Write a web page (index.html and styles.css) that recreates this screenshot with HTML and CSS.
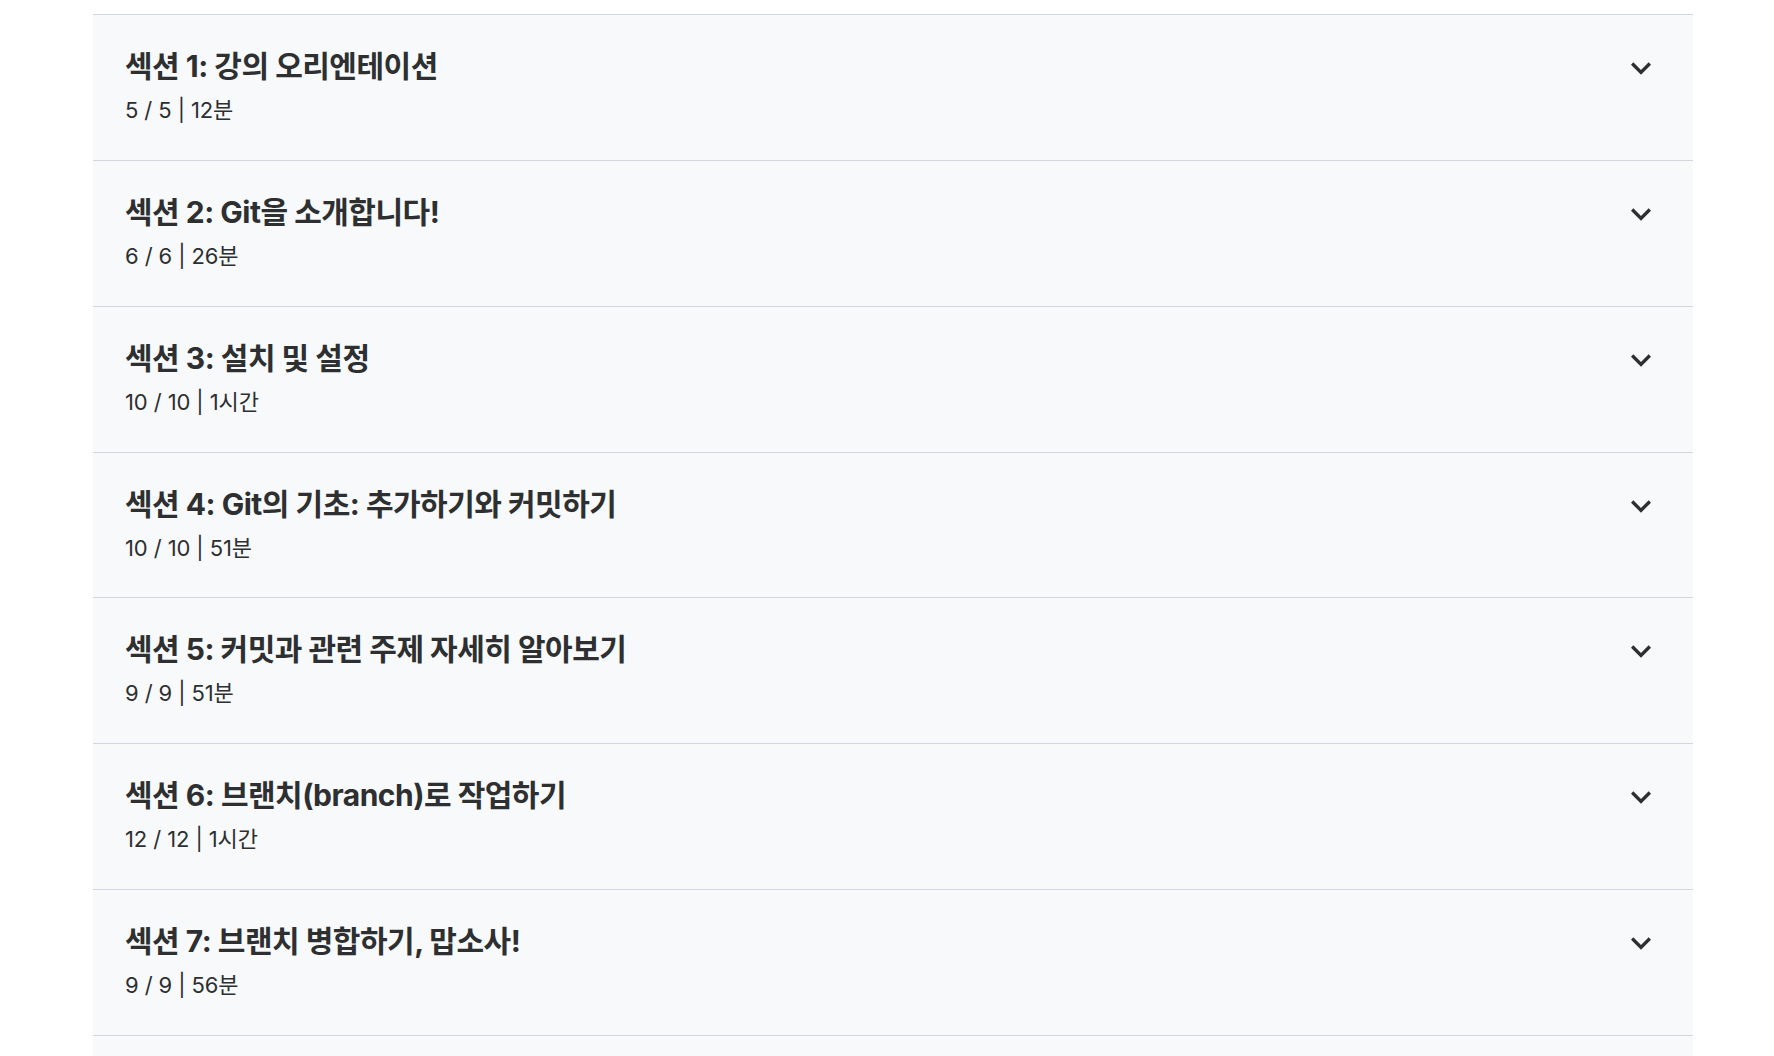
FILE: index.html
```html
<!DOCTYPE html>
<html lang="ko">
<head>
<meta charset="utf-8">
<title>강의 콘텐츠</title>
<link rel="stylesheet" href="styles.css">
</head>
<body>
<div class="page">
  <div class="curriculum">
    <div class="section">
      <div class="info">
        <div class="title">섹션 1: 강의 오리엔테이션</div>
        <div class="meta">5 / 5 | 12분</div>
      </div>
      <svg class="chev" viewBox="0 0 24 24"><path d="M16.59 8.59L12 13.17 7.41 8.59 6 10l6 6 6-6z"/></svg>
    </div>
    <div class="section">
      <div class="info">
        <div class="title">섹션 2: Git을 소개합니다!</div>
        <div class="meta">6 / 6 | 26분</div>
      </div>
      <svg class="chev" viewBox="0 0 24 24"><path d="M16.59 8.59L12 13.17 7.41 8.59 6 10l6 6 6-6z"/></svg>
    </div>
    <div class="section">
      <div class="info">
        <div class="title">섹션 3: 설치 및 설정</div>
        <div class="meta">10 / 10 | 1시간</div>
      </div>
      <svg class="chev" viewBox="0 0 24 24"><path d="M16.59 8.59L12 13.17 7.41 8.59 6 10l6 6 6-6z"/></svg>
    </div>
    <div class="section">
      <div class="info">
        <div class="title">섹션 4: Git의 기초: 추가하기와 커밋하기</div>
        <div class="meta">10 / 10 | 51분</div>
      </div>
      <svg class="chev" viewBox="0 0 24 24"><path d="M16.59 8.59L12 13.17 7.41 8.59 6 10l6 6 6-6z"/></svg>
    </div>
    <div class="section">
      <div class="info">
        <div class="title">섹션 5: 커밋과 관련 주제 자세히 알아보기</div>
        <div class="meta">9 / 9 | 51분</div>
      </div>
      <svg class="chev" viewBox="0 0 24 24"><path d="M16.59 8.59L12 13.17 7.41 8.59 6 10l6 6 6-6z"/></svg>
    </div>
    <div class="section">
      <div class="info">
        <div class="title">섹션 6: 브랜치(branch)로 작업하기</div>
        <div class="meta">12 / 12 | 1시간</div>
      </div>
      <svg class="chev" viewBox="0 0 24 24"><path d="M16.59 8.59L12 13.17 7.41 8.59 6 10l6 6 6-6z"/></svg>
    </div>
    <div class="section">
      <div class="info">
        <div class="title">섹션 7: 브랜치 병합하기, 맙소사!</div>
        <div class="meta">9 / 9 | 56분</div>
      </div>
      <svg class="chev" viewBox="0 0 24 24"><path d="M16.59 8.59L12 13.17 7.41 8.59 6 10l6 6 6-6z"/></svg>
    </div>
    <div class="section section-next"></div>
  </div>
</div>
</body>
</html>
```

FILE: styles.css
```css
html, body {
  margin: 0;
  padding: 0;
  background: #ffffff;
  height: 1056px;
  overflow: hidden;
}
body {
  font-family: Inter, "Noto Sans CJK KR", sans-serif;
  color: #2d2f31;
}
.page {
  padding-top: 14px;
  padding-left: 93px;
}
.curriculum {
  width: 1600px;
}
.section {
  box-sizing: border-box;
  height: 145.86px;
  border-top: 1px solid #d1d7dc;
  background: #f7f9fa;
  padding: 30px 32px 0 32px;
  display: flex;
  align-items: flex-start;
  justify-content: space-between;
}
.info {
  display: flex;
  flex-direction: column;
  gap: 9px;
}
.title {
  font-size: 30px;
  font-weight: 700;
  line-height: 42px;
  letter-spacing: -0.5px;
}
.meta {
  font-size: 22px;
  font-weight: 400;
  line-height: 28px;
  letter-spacing: -0.1px;
}
.chev {
  width: 40px;
  height: 40px;
  margin-top: 3px;
  fill: #2d2f31;
  flex: none;
}
```
